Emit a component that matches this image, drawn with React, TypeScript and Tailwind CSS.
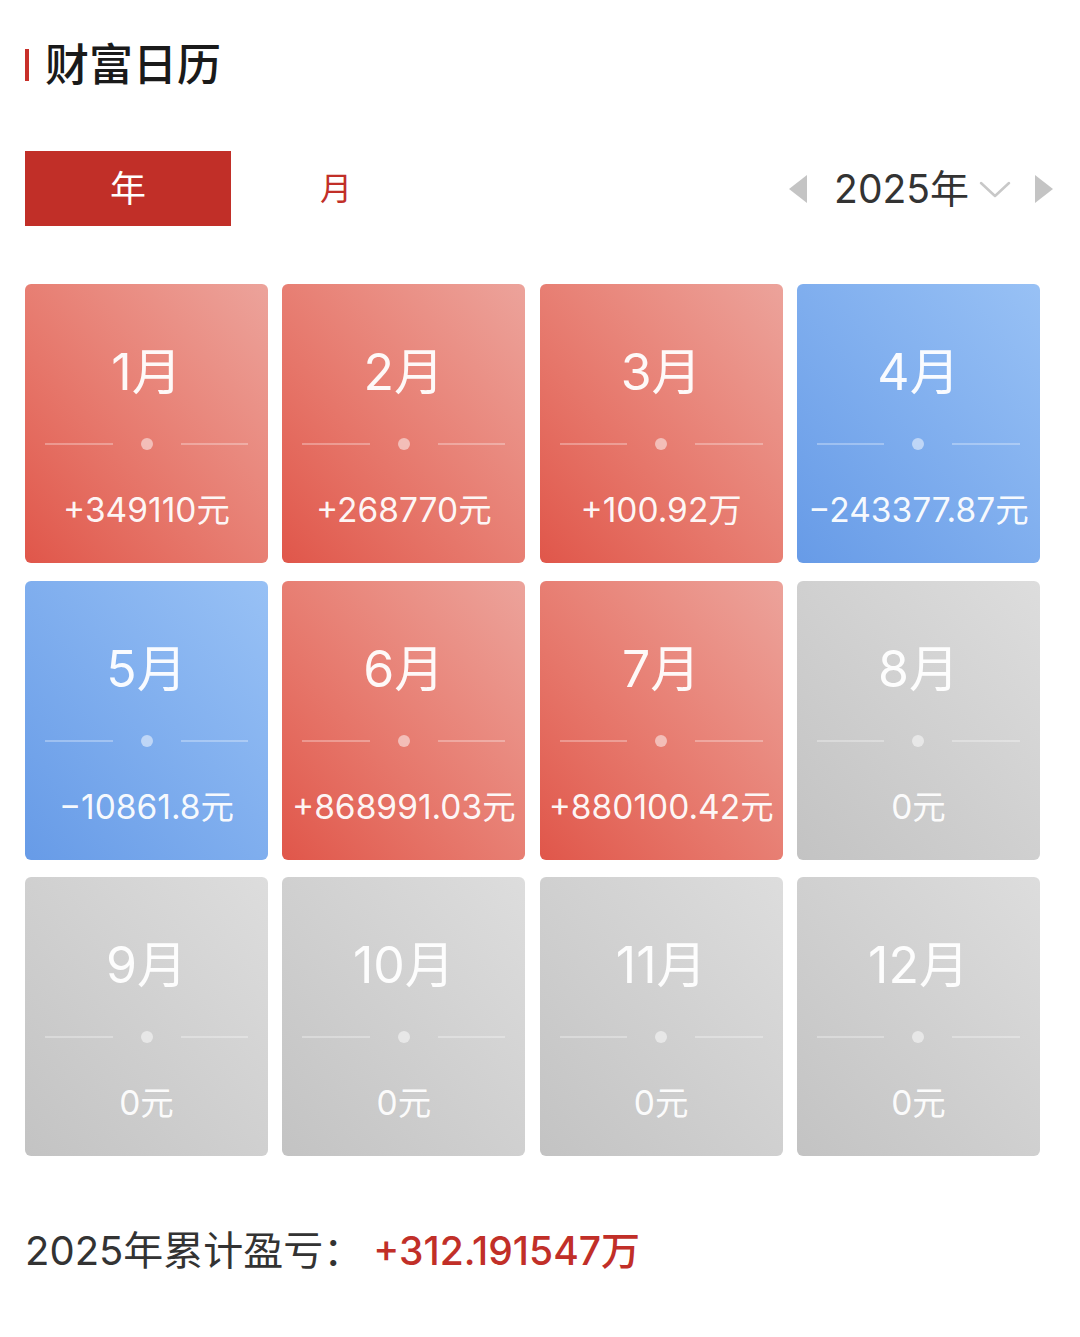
type Tone = "up" | "down" | "none";

type MonthCell = { month: string; amount: string; tone: Tone };

const months: MonthCell[] = [
  { month: "1月", amount: "+349110元", tone: "up" },
  { month: "2月", amount: "+268770元", tone: "up" },
  { month: "3月", amount: "+100.92万", tone: "up" },
  { month: "4月", amount: "−243377.87元", tone: "down" },
  { month: "5月", amount: "−10861.8元", tone: "down" },
  { month: "6月", amount: "+868991.03元", tone: "up" },
  { month: "7月", amount: "+880100.42元", tone: "up" },
  { month: "8月", amount: "0元", tone: "none" },
  { month: "9月", amount: "0元", tone: "none" },
  { month: "10月", amount: "0元", tone: "none" },
  { month: "11月", amount: "0元", tone: "none" },
  { month: "12月", amount: "0元", tone: "none" },
];

const toneClass: Record<Tone, string> = {
  up: "bg-gradient-to-tr from-[#e0564a] to-[#eca39b]",
  down: "bg-gradient-to-tr from-[#679be7] to-[#98c1f5]",
  none: "bg-gradient-to-tr from-[#c3c3c3] to-[#dddddd]",
};

function MonthCard({ cell }: { cell: MonthCell }) {
  return (
    <div className={`flex h-[279px] flex-col items-center rounded-[6px] text-white ${toneClass[cell.tone]}`}>
      <div className="mt-[58px] h-[60px] text-[50px] leading-[60px] text-white/95">{cell.month}</div>
      <div className="mt-[36px] flex w-full items-center px-[20px]">
        <div className="h-[2px] flex-1 bg-white/30" />
        <div className="mx-[28px] h-[12px] w-[12px] rounded-full bg-white/50" />
        <div className="h-[2px] flex-1 bg-white/30" />
      </div>
      <div className="mt-[40px] whitespace-nowrap text-[33.5px] leading-[40px] text-white/95">
        {cell.amount}
      </div>
    </div>
  );
}

export default function App() {
  return (
    <div
      className="min-h-[1337px] bg-white pl-[25px] pr-[40px]"
      style={{ fontFamily: 'Inter, "Noto Sans CJK SC", sans-serif' }}
    >
      {/* Title */}
      <div className="flex items-center pt-[40px]">
        <div className="h-[32px] w-[4px] bg-[#c8302a]" />
        <h1 className="ml-[16px] text-[44px] font-medium leading-[50px] text-[#1a1a1a]">财富日历</h1>
      </div>

      {/* Tabs + year */}
      <div className="mt-[61px] flex h-[75px] items-center">
        <div className="flex h-[75px] w-[206px] items-center justify-center bg-[#c12f28] text-[36px] text-white">
          年
        </div>
        <div className="ml-[89px] text-[32px] text-[#c12f28]">月</div>
        <div className="mr-[-13px] ml-auto flex items-center">
          <div className="h-0 w-0 border-y-[14px] border-r-[18px] border-y-transparent border-r-[#c4c4c4]" />
          <span className="ml-[27px] text-[39px] leading-[48px] text-[#333]">2025年</span>
          <svg className="ml-[10px] mt-[2px]" width="32" height="18" viewBox="0 0 32 18" fill="none">
            <path d="M2 2 L16 15 L30 2" stroke="#c8c8c8" strokeWidth="2.5" strokeLinecap="round" strokeLinejoin="round" />
          </svg>
          <div className="ml-[24px] h-0 w-0 border-y-[14px] border-l-[18px] border-y-transparent border-l-[#c4c4c4]" />
        </div>
      </div>

      {/* Month grid */}
      <div className="mt-[58px] grid grid-cols-4 gap-x-[14.3px] gap-y-[17.5px]">
        {months.map((m) => (
          <MonthCard key={m.month} cell={m} />
        ))}
      </div>

      {/* Summary */}
      <div className="mt-[72px] flex items-center text-[40px] leading-[46px]">
        <span className="text-[#333]">2025年累计盈亏：</span>
        <span className="ml-[10px] text-[39px] font-medium text-[#c12f28]">+312.191547万</span>
      </div>
    </div>
  );
}
